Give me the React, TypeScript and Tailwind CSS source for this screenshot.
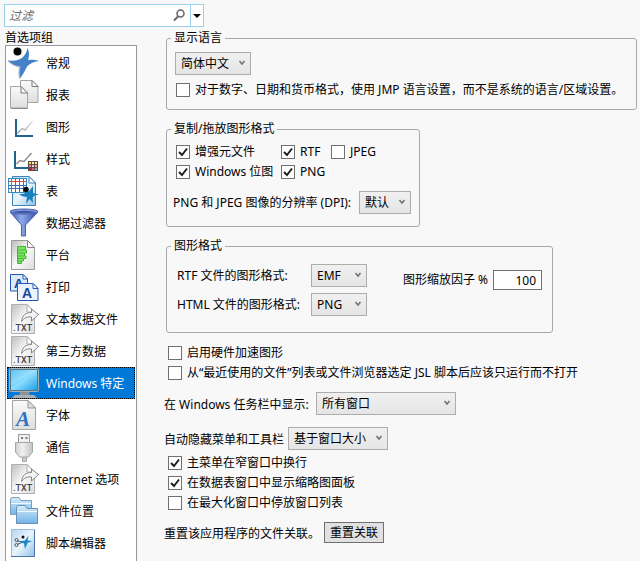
import { useState } from "react";

type IconProps = { children: React.ReactNode };

function Icon(props: IconProps) {
  return (
    <svg className="size-8 shrink-0" viewBox="0 0 32 32" fill="none" aria-hidden="true">
      {props.children}
    </svg>
  );
}

// Gradients shared by all the sidebar icons
function IconDefs() {
  return (
    <svg className="absolute size-0" aria-hidden="true">
      <defs>
        <linearGradient id="paper" x1="0" y1="0" x2="1" y2="1">
          <stop offset="0" stopColor="#bdbdbd" />
          <stop offset="0.5" stopColor="#f9f9f9" />
          <stop offset="1" stopColor="#dcdcdc" />
        </linearGradient>
        <linearGradient id="sheet" x1="0" y1="0" x2="0" y2="1">
          <stop offset="0" stopColor="#fafafa" />
          <stop offset="1" stopColor="#dedede" />
        </linearGradient>
        <linearGradient id="sky" x1="0" y1="0" x2="1" y2="1">
          <stop offset="0" stopColor="#b5d6f0" />
          <stop offset="0.5" stopColor="#e9f5fd" />
          <stop offset="1" stopColor="#8fc0e6" />
        </linearGradient>
        <linearGradient id="folder" x1="0" y1="0" x2="0" y2="1">
          <stop offset="0" stopColor="#d6ecfb" />
          <stop offset="1" stopColor="#6fb3e8" />
        </linearGradient>
        <linearGradient id="funnel" x1="0" y1="0" x2="1" y2="0">
          <stop offset="0" stopColor="#3c58b4" />
          <stop offset="0.4" stopColor="#8fa9ea" />
          <stop offset="1" stopColor="#2f4ba6" />
        </linearGradient>
        <linearGradient id="screen" x1="0" y1="0" x2="1" y2="1">
          <stop offset="0" stopColor="#35b4f2" />
          <stop offset="0.5" stopColor="#8bdcff" />
          <stop offset="1" stopColor="#1e9fe6" />
        </linearGradient>
        <linearGradient id="metal" x1="0" y1="0" x2="1" y2="0">
          <stop offset="0" stopColor="#cfcfcf" />
          <stop offset="0.4" stopColor="#f0f0f0" />
          <stop offset="1" stopColor="#c4c4c4" />
        </linearGradient>
        <linearGradient id="fade" x1="0" y1="1" x2="1" y2="0">
          <stop offset="0" stopColor="#a5a5a5" />
          <stop offset="1" stopColor="#e2e2e2" />
        </linearGradient>
      </defs>
    </svg>
  );
}

function Figure() {
  return (
    <Icon>
      <path d="M0.500 14C4.500 18 8.500 20 12 20.500C11 25 11 29 12.500 32L14 31L14 20L2 13.500Z" fill="#b4b9bf" />
      <path
        d="M1 13.500C8 14.500 14 13 17 9C18.500 7 20 4 20.500 1C22.500 5 22.500 9 21 13C25 12.500 29 13 32 14C27 14.500 23 16.500 20.500 19C18.500 22 16.500 27 13.500 31C12.500 28 12.500 24 13.500 19.500C9.500 19 4.500 17 1 13.500Z"
        fill="#4382c6"
      />
      <circle cx="10.500" cy="4.500" r="4" fill="#000" />
    </Icon>
  );
}

function Pages() {
  return (
    <Icon>
      <path d="M13.500 1.500H25L31 7.500V23.500H13.500Z" fill="url(#sheet)" stroke="#a5a5a5" />
      <path d="M25 1.500V7.500H31Z" fill="#fff" stroke="#777" />
      <path d="M3.500 7.500H14L20.500 14V29H3.500Z" fill="url(#sheet)" stroke="#a5a5a5" />
      <path d="M14 7.500V14H20.500Z" fill="#fff" stroke="#777" />
      <path d="M4 29.500H20.500" stroke="#8b8b8b" />
    </Icon>
  );
}

function Graph() {
  return (
    <Icon>
      <path d="M10.500 22.500L15 17.500L18 19L25.500 10" stroke="url(#fade)" strokeWidth="1.500" />
      <path d="M9 8V25H26" stroke="#1f6391" strokeWidth="2" />
    </Icon>
  );
}

const swatches = ["#f4e04c", "#fbf3a8", "#f7ea86", "#e88b8b", "#f6c7c7", "#f0a8a8", "#b02a35", "#d9686c", "#8fa8d8"];

function GraphStyle() {
  return (
    <Icon>
      <path d="M9.500 21L13 17.500L17 18.500L24.500 10" stroke="#909090" strokeWidth="1.500" />
      <path d="M8 8V25H21" stroke="#1f6391" strokeWidth="2" />
      <rect x="21" y="18" width="10" height="10" fill="#5b4b4b" />
      {swatches.map((color, i) => (
        <rect key={color} x={22 + (i % 3) * 3} y={19 + Math.floor(i / 3) * 3} width="2" height="2" fill={color} />
      ))}
    </Icon>
  );
}

function DataTable() {
  return (
    <Icon>
      <path d="M5.500 1.500H22L28.500 8V30.500H5.500Z" fill="url(#sky)" stroke="#3d83b8" />
      <path d="M22 1.500V8H28.500Z" fill="#fff" stroke="#3d83b8" />
      <rect x="1.500" y="3.500" width="18" height="14" fill="#fff" stroke="#3a8ac4" />
      <path d="M8.500 4V17M12.500 4V17M16.500 4V17M2 10.500H19M2 13.500H19" stroke="#3c6fae" />
      <path d="M4.500 4V17M2 6.500H19" stroke="#e04848" />
      <path
        d="M12 19C17 19.500 21 17 23 15L26 11L26 18L32 19.500C28 20 26 21 25.500 23L26 28L22.500 24L19 29L20 22C17 22 14 21 12 19Z"
        fill="#1880bd"
      />
      <circle cx="19" cy="14.500" r="2.700" fill="#000" />
    </Icon>
  );
}

function Funnel() {
  return (
    <Icon>
      <path d="M3 5L14.500 18V29H18.500V18L31 5Z" fill="url(#funnel)" stroke="#4a62b0" />
      <ellipse cx="17" cy="4.500" rx="14" ry="2.500" fill="#7c95de" stroke="#4a62b0" />
      <ellipse cx="17" cy="5" rx="11" ry="1.200" fill="#4259a4" />
    </Icon>
  );
}

function Platform() {
  return (
    <Icon>
      <path d="M4.500 1.500H20.500L27.500 8.500V30.500H4.500Z" fill="url(#paper)" stroke="#9b9b9b" />
      <path d="M20.500 1.500V8.500H27.500Z" fill="#fff" stroke="#888" />
      <path
        d="M10.500 7.500H18.500V11H19.500V14H17.500V17H19V19.500H16.500V22H14.500V24.500H10.500Z"
        fill="#7fe566"
        stroke="#43b534"
      />
      <path d="M11 11H18M11 14H17M11 17H17M11 19.500H16M11 22H14" stroke="#43b534" />
    </Icon>
  );
}

function Print() {
  return (
    <Icon>
      <path d="M3.500 3.500H16L20.500 8V20H3.500Z" fill="#dbe9fb" stroke="#2359b8" />
      <path d="M16 3.500V8H20.500Z" fill="#fff" stroke="#2359b8" />
      <text x="7" y="17" fontFamily="Liberation Sans" fontWeight="700" fontSize="13" fill="#1b418f">A</text>
      <path d="M10.500 12.500H26L31 17.500V29.500H10.500Z" fill="#eaf3fe" stroke="#2359b8" />
      <path d="M26 12.500V17.500H31Z" fill="#fff" stroke="#2359b8" />
      <text x="15" y="27" fontFamily="Liberation Sans" fontWeight="700" fontSize="14" fill="#1d479c">A</text>
    </Icon>
  );
}

function TextFile() {
  return (
    <Icon>
      <path d="M4.500 1.500H20L27.500 9V30.500H4.500Z" fill="url(#paper)" stroke="#b0b0b0" />
      <path d="M20 1.500V9H27.500Z" fill="#fff" stroke="#aaa" />
      <path
        d="M14.500 18.500C15.500 11.500 19 9.500 24.500 9.500V6L31.500 11.500L24.500 18V14C20 13.500 17.500 15 14.500 18.500Z"
        fill="#f3f3f3"
        stroke="#858585"
      />
      <text x="6" y="28" fontFamily="Roboto" fontWeight="500" fontSize="9" fill="#444">.TXT</text>
    </Icon>
  );
}

function Monitor() {
  return (
    <Icon>
      <path d="M13 24H22L23 29H12Z" fill="#8b9296" />
      <path d="M8 28H27L30 31H5Z" fill="#a9b0b4" />
      <rect x="2.500" y="1.500" width="29" height="23" rx="1" fill="#5a7482" stroke="#9fb0b9" />
      <rect x="4" y="3" width="26" height="20" fill="url(#screen)" />
      <path d="M4 3H30L4 18Z" fill="#fff" opacity="0.2" />
    </Icon>
  );
}

function FontPage() {
  return (
    <Icon>
      <path d="M5.500 1.500H21L28.500 9V30.500H5.500Z" fill="url(#sheet)" stroke="#a3a3a3" />
      <path d="M21 1.500V9H28.500Z" fill="#ddd" stroke="#999" />
      <text x="9" y="27" fontFamily="Liberation Serif" fontStyle="italic" fontWeight="700" fontSize="21" fill="#2f74c0">A</text>
    </Icon>
  );
}

function Usb() {
  return (
    <Icon>
      <path d="M15.500 24H19.500V30.500H15.500Z" fill="#c9c9c9" stroke="#a9a9a9" />
      <rect x="11.500" y="3.500" width="11" height="9" fill="#f0f0f0" stroke="#9a9a9a" />
      <path d="M14 7H16M18.500 7H20.500" stroke="#777" strokeWidth="2" />
      <path d="M8.500 11.500H25.500V21L21.500 26H12.500L8.500 21Z" fill="url(#metal)" stroke="#a6a6a6" />
    </Icon>
  );
}

function Folders() {
  return (
    <Icon>
      <path d="M3.500 19.500V3.500L5 2.500H12L14 5.500H24.500V19.500Z" fill="url(#folder)" stroke="#7fa0ba" />
      <path d="M4 8.500H24" stroke="#eef8ff" />
      <path d="M9.500 28.500V11.500L11 10.500H18L20 13.500H30.500V28.500Z" fill="url(#folder)" stroke="#6b92b2" />
      <path d="M10 16.500H30" stroke="#eef8ff" />
    </Icon>
  );
}

function Script() {
  return (
    <Icon>
      <rect x="4.500" y="2.500" width="23" height="27" fill="url(#sky)" stroke="#9dbce0" />
      <path d="M4 29.500H27.500V3" stroke="#4c72a8" />
      <path d="M10 14L16 15M10 17.500L16 15" stroke="#555" />
      <circle cx="9.500" cy="13" r="1.500" stroke="#555" />
      <circle cx="9.500" cy="18" r="1.500" stroke="#555" />
      <path d="M12 14.500L18 13.500L21.500 8.500L20.500 13.500L25 14L20.500 16L18 22L17 16.500Z" fill="#1c87c9" />
      <circle cx="16" cy="10" r="1.500" fill="#111" />
    </Icon>
  );
}

const groups = [
  { name: "常规", icon: <Figure /> },
  { name: "报表", icon: <Pages /> },
  { name: "图形", icon: <Graph /> },
  { name: "样式", icon: <GraphStyle /> },
  { name: "表", icon: <DataTable /> },
  { name: "数据过滤器", icon: <Funnel /> },
  { name: "平台", icon: <Platform /> },
  { name: "打印", icon: <Print /> },
  { name: "文本数据文件", icon: <TextFile /> },
  { name: "第三方数据", icon: <TextFile /> },
  { name: "Windows 特定", icon: <Monitor /> },
  { name: "字体", icon: <FontPage /> },
  { name: "通信", icon: <Usb /> },
  { name: "Internet 选项", icon: <TextFile /> },
  { name: "文件位置", icon: <Folders /> },
  { name: "脚本编辑器", icon: <Script /> },
];

type CheckProps = { label: string; checked?: boolean };

function Check(props: CheckProps) {
  return (
    <label className="flex h-5 items-center gap-[5px] whitespace-nowrap">
      <span className="relative size-3.5 shrink-0">
        <input
          type="checkbox"
          defaultChecked={props.checked}
          className="peer block size-3.5 appearance-none border border-[#707070] bg-white"
        />
        <svg
          className="pointer-events-none absolute inset-0 hidden size-3.5 peer-checked:block"
          viewBox="0 0 14 14"
          fill="none"
        >
          <path d="M3 7L6 10L11 3.500" stroke="#212121" strokeWidth="2" />
        </svg>
      </span>
      {props.label}
    </label>
  );
}

type SelectProps = { id: string; options: string[]; className: string; label?: string };

function Select(props: SelectProps) {
  return (
    <div className={`relative h-[23px] ${props.className}`}>
      <select
        id={props.id}
        aria-label={props.label}
        className="block h-full w-full appearance-none border border-[#acacac] bg-linear-to-b from-[#f0f0f0] to-[#e5e5e5] pr-4 pl-[5px]"
      >
        {props.options.map((option) => (
          <option key={option}>{option}</option>
        ))}
      </select>
      <svg
        className="pointer-events-none absolute top-2 right-[5px] h-1.5 w-2"
        viewBox="0 0 8 6"
        fill="none"
      >
        <path d="M1.500 1L4 4L6.500 1" stroke="#707070" strokeWidth="1.500" />
      </svg>
    </div>
  );
}

type GroupBoxProps = { title: string; className: string; children: React.ReactNode };

function GroupBox(props: GroupBoxProps) {
  return (
    <fieldset className={`ml-0.5 min-w-0 rounded-[3px] border border-[#a9a9a9] pl-1 ${props.className}`}>
      <legend className="px-[3px] leading-4">{props.title}</legend>
      {props.children}
    </fieldset>
  );
}

export default function App() {
  const [selected, setSelected] = useState("Windows 特定");

  return (
    <div className="flex min-h-screen flex-col bg-[#f8f8f8] pt-1 font-['Noto_Sans','Noto_Sans_CJK_SC',sans-serif] text-[12px] leading-4 text-black">
      <IconDefs />
      <div className="ml-1 flex h-[23px] w-[200px] border border-[#99d1ef] bg-white">
        <input
          type="text"
          aria-label="过滤"
          placeholder="过滤"
          className="min-w-0 flex-1 pl-1 italic outline-none placeholder:text-[#6d6d6d]"
        />
        <svg className="mt-[3px] mr-1 size-3.5" viewBox="0 0 14 14" fill="none" aria-hidden="true">
          <circle cx="8.500" cy="5.500" r="3.500" stroke="#666" strokeWidth="1.500" />
          <path d="M6 8.500L2 12.500" stroke="#666" strokeWidth="2" />
        </svg>
        <button aria-label="过滤选项" className="flex w-[13px] items-center justify-center border-l border-[#99d1ef]">
          <svg className="h-1 w-2" viewBox="0 0 8 4">
            <path d="M0 0H8L4 4Z" fill="#000" />
          </svg>
        </button>
      </div>

      <div className="mt-[3px] flex flex-1 pr-[3px]">
        <nav className="ml-[5px] flex w-[132px] shrink-0 flex-col">
          <h1 className="h-[15px]">首选项组</h1>
          <ul className="flex-1 border border-b-0 border-[#999999] bg-white p-px">
            {groups.map((group) => (
              <li key={group.name}>
                <button
                  onClick={() => setSelected(group.name)}
                  className={`flex h-8 w-full items-center gap-[7px] text-left whitespace-nowrap ${
                    selected === group.name
                      ? "bg-[#0078d7] text-white outline outline-dotted -outline-offset-1 outline-black"
                      : ""
                  }`}
                >
                  {group.icon}
                  <span className="pt-0.5">{group.name}</span>
                </button>
              </li>
            ))}
          </ul>
        </nav>

        <main className="ml-[27px] min-w-0 flex-1">
          <GroupBox title="显示语言" className="pb-[9px]">
            <div className="pt-1.5 pl-1">
              <Select id="language" label="显示语言" options={["简体中文"]} className="w-[76px]" />
              <div className="mt-[5px] ml-px">
                <Check label="对于数字、日期和货币格式，使用 JMP 语言设置，而不是系统的语言/区域设置。" />
              </div>
            </div>
          </GroupBox>

          <GroupBox title="复制/拖放图形格式" className="mt-[11px] w-fit pr-2 pb-3">
            <div className="pt-[5px] pl-0.5">
              <div className="ml-[3px] grid grid-cols-[105px_50px_auto]">
                <Check label="增强元文件" checked />
                <Check label="RTF" checked />
                <Check label="JPEG" />
                <Check label="Windows 位图" checked />
                <Check label="PNG" checked />
              </div>
              <div className="mt-[9px] flex items-center">
                <label htmlFor="dpi" className="w-[186px] whitespace-nowrap">
                  PNG 和 JPEG 图像的分辨率 (DPI):
                </label>
                <Select id="dpi" options={["默认"]} className="w-[52px]" />
              </div>
            </div>
          </GroupBox>

          <GroupBox title="图形格式" className="mt-[11px] w-fit pr-2.5 pb-4">
            <div className="flex items-start pt-2.5 pl-1.5">
              <div className="grid grid-cols-[134px_auto] items-center gap-y-1.5">
                <label htmlFor="rtf">RTF 文件的图形格式:</label>
                <Select id="rtf" options={["EMF"]} className="w-14" />
                <label htmlFor="html">HTML 文件的图形格式:</label>
                <Select id="html" options={["PNG"]} className="w-14" />
              </div>
              <div className="mt-1.5 ml-9 flex items-center">
                <label htmlFor="scale" className="w-[90px] whitespace-nowrap">
                  图形缩放因子 %
                </label>
                <input
                  id="scale"
                  type="text"
                  defaultValue="100"
                  className="h-5 w-[49px] border border-[#707070] bg-white pr-[5px] text-right"
                />
              </div>
            </div>
          </GroupBox>

          <div className="mt-2.5 ml-1">
            <Check label="启用硬件加速图形" />
            <Check label="从“最近使用的文件”列表或文件浏览器选定 JSL 脚本后应该只运行而不打开" />
          </div>

          <div className="mt-[9px] flex items-center">
            <label htmlFor="taskbar" className="w-[152px] pt-0.5 whitespace-nowrap">
              在 Windows 任务栏中显示:
            </label>
            <Select id="taskbar" options={["所有窗口"]} className="w-[140px]" />
          </div>

          <div className="mt-3 flex items-center">
            <label htmlFor="autohide" className="w-[124px] pt-0.5 whitespace-nowrap">
              自动隐藏菜单和工具栏
            </label>
            <Select id="autohide" options={["基于窗口大小"]} className="w-[100px]" />
          </div>

          <div className="mt-[3px] ml-1">
            <Check label="主菜单在窄窗口中换行" checked />
            <Check label="在数据表窗口中显示缩略图面板" checked />
            <Check label="在最大化窗口中停放窗口列表" />
          </div>

          <div className="mt-[9px] flex items-center">
            <span className="w-40 pt-0.5">重置该应用程序的文件关联。</span>
            <button className="h-[21px] w-[60px] border border-[#707070] bg-[#e1e1e1] leading-4">重置关联</button>
          </div>
        </main>
      </div>
    </div>
  );
}
